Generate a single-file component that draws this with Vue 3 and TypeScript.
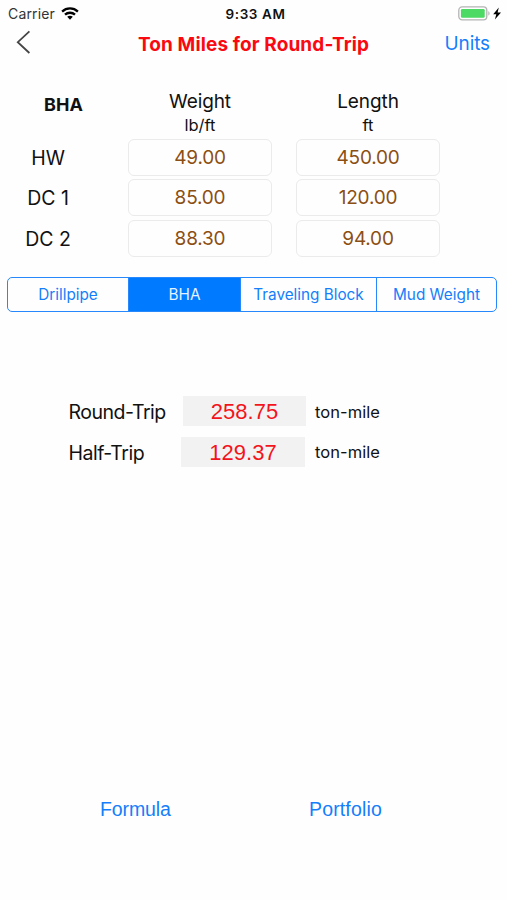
<script setup lang="ts">
import { ref } from 'vue'

interface BhaRow {
  id: string
  label: string
  weight: string
  length: string
}

interface Result {
  id: string
  label: string
  value: string
  unit: string
}

const rows = ref<BhaRow[]>([
  { id: 'hw', label: 'HW', weight: '49.00', length: '450.00' },
  { id: 'dc1', label: 'DC 1', weight: '85.00', length: '120.00' },
  { id: 'dc2', label: 'DC 2', weight: '88.30', length: '94.00' },
])

const tabs: string[] = ['Drillpipe', 'BHA', 'Traveling Block', 'Mud Weight']
const activeTab = ref<string>('BHA')

const results: Result[] = [
  { id: 'round', label: 'Round-Trip', value: '258.75', unit: 'ton-mile' },
  { id: 'half', label: 'Half-Trip', value: '129.37', unit: 'ton-mile' },
]
</script>

<template>
  <main class="screen">
    <header class="status">
      <div class="status-left">
        <span class="carrier">Carrier</span>
        <svg class="wifi" width="18" height="14" viewBox="0 0 18 14" fill="none" stroke="#000" stroke-width="2.3">
          <path d="M1.1 4.6C5.6.4 12.4.4 16.9 4.6" />
          <path d="M4 7.7C6.8 5.1 11.2 5.1 14 7.7" />
          <path d="M9 12.7 6.2 9.8C7.8 8.3 10.2 8.3 11.8 9.8Z" fill="#000" stroke="none" />
        </svg>
      </div>
      <span class="clock">9:33 AM</span>
      <div class="status-right">
        <svg width="46" height="16" viewBox="0 0 46 16">
          <rect x="1.8" y=".9" width="28" height="13" rx="3.4" fill="#fff" stroke="#b4b4b4" stroke-width="1.3" />
          <rect x="3.9" y="3" width="23.8" height="8.8" rx="1.3" fill="#4cd964" />
          <path d="M31.3 5.2C33 5.8 33 9 31.3 9.6Z" fill="#b4b4b4" />
          <path d="M41.8 1.6 36.2 8.3H39.3L37.9 13.4 44 6.5H40.6Z" fill="#000" />
        </svg>
      </div>
    </header>

    <nav class="navbar">
      <button class="back" type="button" aria-label="Back">
        <svg width="15" height="24" viewBox="0 0 15 24" fill="none" stroke="#454545" stroke-width="1.8">
          <path d="M13.4 1.4 1.8 12.2 13.4 23" />
        </svg>
      </button>
      <h1 class="title">Ton Miles for Round-Trip</h1>
      <button class="units" type="button">Units</button>
    </nav>

    <section class="table">
      <div class="table-head">
        <strong class="bha">BHA</strong>
        <div class="col-head"><span>Weight</span><small>lb/ft</small></div>
        <div class="col-head"><span>Length</span><small>ft</small></div>
      </div>
      <div v-for="row in rows" :key="row.id" class="table-row">
        <label class="row-label">{{ row.label }}</label>
        <div class="field">{{ row.weight }}</div>
        <div class="field">{{ row.length }}</div>
      </div>
    </section>

    <div class="segments">
      <button
        v-for="tab in tabs"
        :key="tab"
        type="button"
        class="segment"
        :class="{ active: tab === activeTab }"
        @click="activeTab = tab"
      >{{ tab }}</button>
    </div>

    <section class="results">
      <div v-for="r in results" :key="r.id" class="result" :class="r.id">
        <span class="result-label">{{ r.label }}</span>
        <output class="result-value">{{ r.value }}</output>
        <span class="result-unit">{{ r.unit }}</span>
      </div>
    </section>

    <footer class="footer">
      <button class="link formula" type="button">Formula</button>
      <button class="link portfolio" type="button">Portfolio</button>
    </footer>
  </main>
</template>

<style>
body {
  background: #fff;
}
</style>

<style scoped>
.screen {
  box-sizing: border-box;
  display: flex;
  flex-direction: column;
  width: 507px;
  height: 900px;
  background: #fefefe;
  color: #111;
  font-family: Inter, sans-serif;
  white-space: nowrap;
  overflow: hidden;
}
button {
  margin: 0;
  padding: 0;
  border: 0;
  background: none;
  color: #147efb;
  font-family: inherit;
}
.status {
  display: grid;
  grid-template-columns: 1fr 64px 1fr;
  height: 27px;
  padding: 0 4px 0 8px;
  align-items: center;
}
.status-left {
  display: flex;
  align-items: center;
  gap: 6px;
}
.carrier {
  color: #333;
  font-size: 14px;
  letter-spacing: 0.15px;
}
.clock {
  font-size: 13.5px;
  font-weight: 600;
  letter-spacing: 0.6px;
  text-align: center;
}
.status-right {
  display: flex;
  justify-content: flex-end;
}
.navbar {
  display: grid;
  grid-template-columns: 100px 1fr 100px;
  height: 33px;
  align-items: center;
}
.back {
  display: flex;
  padding: 0 0 3px 16px;
}
.title {
  margin: 0;
  padding-top: 3px;
  color: #f90a12;
  font-size: 19px;
  font-weight: 700;
  letter-spacing: 0.12px;
  line-height: 24px;
  text-align: center;
}
.units {
  padding-right: 17px;
  font-size: 19px;
  letter-spacing: -0.1px;
  line-height: 24px;
  text-align: right;
}
.table {
  padding: 28px 0 0;
}
.table-head {
  display: grid;
  grid-template-columns: 104px 144px 144px;
  column-gap: 24px;
  height: 51px;
}
.bha {
  padding-left: 44px;
  font-size: 18px;
  letter-spacing: 0.1px;
  line-height: 33px;
}
.col-head {
  display: flex;
  flex-direction: column;
  align-items: center;
}
.col-head span {
  padding-top: 1px;
  font-size: 19px;
  letter-spacing: -0.1px;
  line-height: 26px;
}
.col-head small {
  font-size: 16.5px;
  line-height: 20px;
}
.table-row {
  display: grid;
  grid-template-columns: 96px 144px 144px;
  column-gap: 24px;
  padding-left: 8px;
  height: 37px;
  margin-bottom: 3.3px;
}
.row-label {
  padding-right: 16px;
  font-size: 19.5px;
  line-height: 38px;
  text-align: center;
}
.field {
  box-sizing: border-box;
  height: 37px;
  border: 1px solid #ebebeb;
  border-radius: 6px;
  color: #8b4f14;
  font-size: 19px;
  letter-spacing: -0.2px;
  line-height: 35px;
  text-align: center;
}
.segments {
  box-sizing: border-box;
  display: grid;
  grid-template-columns: 120px 112px 136px 1fr;
  width: 490px;
  height: 35px;
  margin: 17px 0 0 7px;
  border: 1.5px solid #2688fa;
  border-radius: 5px;
  overflow: hidden;
}
.segment {
  padding-top: 1px;
  font-size: 15.3px;
  line-height: 32px;
}
.segment + .segment {
  border-left: 1px solid #2688fa;
}
.segment.active {
  background: #007aff;
  color: #e5f2ff;
}
.results {
  display: flex;
  flex-direction: column;
  gap: 11px;
  padding: 84px 0 0 69px;
}
.result {
  display: grid;
  grid-template-columns: 114px 123px 1fr;
  grid-template-rows: 30px;
  height: 30px;
}
.result.half {
  grid-template-columns: 112px 124px 1fr;
}
.result-label {
  margin-left: -0.5px;
  font-size: 19.5px;
  letter-spacing: -0.5px;
  line-height: 32px;
}
.result-value {
  background: #f2f2f2;
  color: #f3141c;
  font-family: "Liberation Sans", sans-serif;
  font-size: 22px;
  line-height: 31px;
  text-align: center;
}
.result-unit {
  padding-left: 9px;
  font-size: 16.5px;
  letter-spacing: 0.05px;
  line-height: 33px;
}
.half .result-unit {
  padding-left: 10px;
  line-height: 31px;
}
.footer {
  display: flex;
  margin-top: auto;
  padding: 0 0 79px 100px;
}
.link {
  font-family: "Liberation Sans", sans-serif;
  font-size: 19.5px;
  line-height: 24px;
  text-align: left;
}
.formula {
  width: 209px;
  letter-spacing: -0.1px;
}
.portfolio {
  letter-spacing: 0.15px;
}
</style>
